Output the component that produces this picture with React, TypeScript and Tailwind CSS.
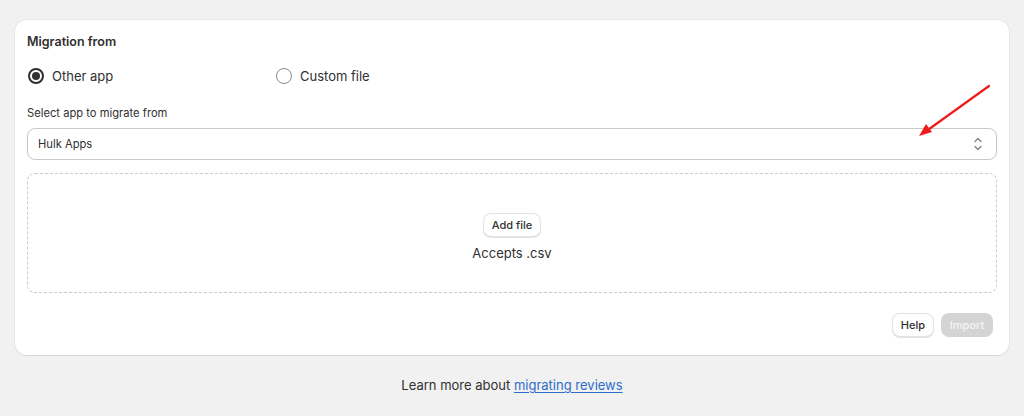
import React from "react";

export default function App() {
  return (
    <div className="min-h-[416px] w-full bg-[#f1f1f1] pt-[20px] px-[15px] text-[#303030]" style={{ fontFamily: "Inter, 'Noto Sans', sans-serif" }}>
      <div className="relative rounded-[12px] bg-white shadow-[0_1px_0_0_rgba(26,26,26,0.07),0_0_0_1px_rgba(0,0,0,0.04)] px-[12px] pt-[12px] pb-[18px]">
        <h2 className="text-[12.5px] font-semibold leading-[20px]">Migration from</h2>
        <div className="mt-[13px] flex items-center h-[22px]">
          <label className="flex w-[249px] items-center gap-[8px] pl-[1px]">
            <span className="flex h-[16px] w-[16px] items-center justify-center rounded-full border-[2px] border-[#303030]">
              <span className="h-[8px] w-[8px] rounded-full bg-[#303030]" />
            </span>
            <span className="text-[13px] leading-[20px]">Other app</span>
          </label>
          <label className="flex items-center gap-[8px]">
            <span className="h-[16px] w-[16px] rounded-full border-[1.5px] border-[#8a8a8a]" />
            <span className="text-[13px] leading-[20px]">Custom file</span>
          </label>
        </div>
        <div className="mt-[18px] text-[11.2px] leading-[16px]">Select app to migrate from</div>
        <div className="mt-[7px] flex h-[32px] items-center justify-between rounded-[8px] border border-[#c9c9c9] pl-[10px] pr-[12px]">
          <span className="text-[11.2px] leading-[16px]">Hulk Apps</span>
          <svg width="12" height="18" viewBox="0 0 12 18" fill="none" stroke="#8a8a8a" strokeWidth="1.5" strokeLinecap="round" strokeLinejoin="round">
            <path d="M3 6.5 6 3.5 9 6.5" />
            <path d="M3 11.5 6 14.5 9 11.5" />
          </svg>
        </div>
        <div className="mt-[13px] flex h-[120px] flex-col items-center justify-center rounded-[8px] border border-dashed border-[#cccccc]">
          <button className="mt-[9px] h-[24px] rounded-[8px] bg-white px-[9px] text-[11px] font-medium leading-[16px] text-[#303030] shadow-[0_1px_0_0_#e3e3e3,inset_0_0_0_1px_#e3e3e3,inset_0_-1px_0_0_#d4d4d4]">
            Add file
          </button>
          <div className="mt-[6px] text-[13px] leading-[20px]">Accepts .csv</div>
        </div>
        <div className="mt-[20px] flex justify-end gap-[7px] pr-[4px]">
          <button className="h-[24px] rounded-[8px] bg-white px-[9px] text-[11px] font-medium leading-[16px] text-[#303030] shadow-[0_1px_0_0_#e3e3e3,inset_0_0_0_1px_#e3e3e3,inset_0_-1px_0_0_#d4d4d4]">
            Help
          </button>
          <button className="h-[24px] w-[52px] rounded-[8px] bg-[#d4d4d4] text-[11px] font-medium leading-[16px] text-[#f5f5f5]">
            Import
          </button>
        </div>
        <svg className="absolute left-[900px] top-[63px]" width="80" height="60" viewBox="0 0 80 60" fill="none">
          <line x1="74" y1="3" x2="10" y2="49" stroke="#ee1c1c" strokeWidth="2.2" strokeLinecap="round" />
          <path d="M4 53 L11 41 L17 49 Z" fill="#ee1c1c" />
        </svg>
      </div>
      <div className="mt-[20px] text-center text-[13px] leading-[20px] text-[#303030]">
        Learn more about{" "}
        <a href="#" className="text-[#2c6ecb] underline underline-offset-[2px]">migrating reviews</a>
      </div>
    </div>
  );
}
